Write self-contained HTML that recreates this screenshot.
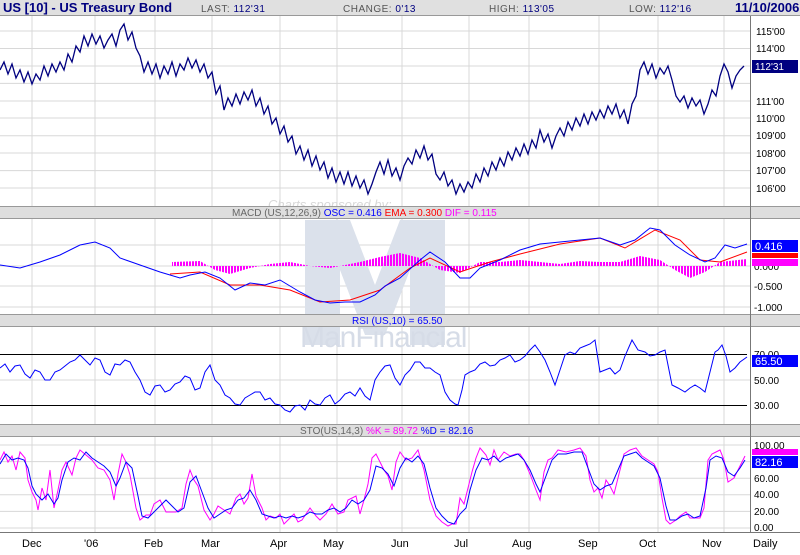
<!DOCTYPE html>
<html><head><meta charset="utf-8"><style>
body{margin:0;width:800px;height:550px;overflow:hidden;background:#fff;font-family:"Liberation Sans",Arial,sans-serif}
</style></head><body>
<svg width="800" height="550" xmlns="http://www.w3.org/2000/svg" font-family="Liberation Sans, Arial, sans-serif">
<defs>
<pattern id="hs" width="3" height="10" patternUnits="userSpaceOnUse"><rect width="2" height="10" fill="#f0f"/></pattern>
</defs>
<rect width="800" height="550" fill="#fff"/>
<g stroke="#d8d8d8" stroke-width="1">
<path d="M32 16V532M95 16V532M155 16V532M212 16V532M280 16V532M337 16V532M402 16V532M469 16V532M529 16V532M599 16V532M658 16V532M724 16V532"/>
<path d="M0 31H750M0 48.5H750M0 66H750M0 83.4H750M0 101H750M0 118H750M0 135.7H750M0 153H750M0 170.6H750M0 188H750"/>
<path d="M0 245H750M0 266H750M0 286H750M0 307H750"/>
<path d="M0 380H750"/>
<path d="M0 445H750M0 461.6H750M0 478.2H750M0 494.8H750M0 511.4H750M0 528H750"/>
</g>
<g fill="#dbe1eb">
<polygon points="305,220 350,220 375,285 400,220 445,220 445,345 410,345 410,270 385,335 365,335 340,270 340,345 305,345"/>
</g>
<text x="268" y="209" font-size="13" fill="#d8d8d8" font-style="italic">Charts sponsored by:</text>
<text x="300" y="347" font-size="30" fill="#d6dce7" letter-spacing="-1">ManFinancial</text>
<rect x="0" y="0" width="800" height="15" fill="#e0e0e0"/>
<line x1="0" y1="15.5" x2="800" y2="15.5" stroke="#999"/>
<text x="3" y="12" font-size="13" font-weight="bold" fill="#000080">US [10] - US Treasury Bond</text>
<text x="201" y="12" font-size="10" fill="#555" letter-spacing=".5">LAST: <tspan fill="#000080">112'31</tspan></text>
<text x="343" y="12" font-size="10" fill="#555" letter-spacing=".5">CHANGE: <tspan fill="#000080">0'13</tspan></text>
<text x="489" y="12" font-size="10" fill="#555" letter-spacing=".5">HIGH: <tspan fill="#000080">113'05</tspan></text>
<text x="629" y="12" font-size="10" fill="#555" letter-spacing=".5">LOW: <tspan fill="#000080">112'16</tspan></text>
<text x="735" y="12" font-size="13" font-weight="bold" fill="#000080">11/10/2006</text>
<g fill="#dedede" stroke="#999">
<rect x="-1" y="206.5" width="802" height="12"/>
<rect x="-1" y="314.5" width="802" height="12"/>
<rect x="-1" y="424.5" width="802" height="12"/>
</g>
<text x="232" y="216" font-size="10" fill="#666">MACD (US,12,26,9) <tspan fill="#0000ff">OSC = 0.416</tspan> <tspan fill="#f00">EMA = 0.300</tspan> <tspan fill="#f0f">DIF = 0.115</tspan></text>
<text x="352" y="324" font-size="10" fill="#0000ff">RSI (US,10) = 65.50</text>
<text x="300" y="434" font-size="10" fill="#666">STO(US,14,3) <tspan fill="#f0f">%K = 89.72</tspan> <tspan fill="#0000ff">%D = 82.16</tspan></text>
<line x1="750.5" y1="16" x2="750.5" y2="532" stroke="#777"/>
<line x1="0" y1="532.5" x2="800" y2="532.5" stroke="#777"/>
<g font-size="10" fill="#000">
<text x="756" y="35">115'00</text><text x="756" y="52">114'00</text>
<text x="756" y="105">111'00</text><text x="756" y="122">110'00</text><text x="756" y="139">109'00</text>
<text x="756" y="157">108'00</text><text x="756" y="174">107'00</text><text x="756" y="192">106'00</text>
<text x="754" y="270">0.000</text><text x="754" y="290">-0.500</text><text x="754" y="311">-1.000</text>
<text x="754" y="358">70.00</text><text x="754" y="384">50.00</text><text x="754" y="409">30.00</text>
<text x="754" y="449">100.00</text><text x="754" y="482">60.00</text><text x="754" y="498">40.00</text><text x="754" y="515">20.00</text><text x="754" y="531">0.00</text>
</g>
<rect x="752" y="60" width="46" height="13" fill="#000080"/><text x="755" y="70" font-size="10" fill="#fff">112'31</text>
<rect x="752" y="240" width="46" height="12" fill="#00f"/><text x="755" y="250" font-size="11" fill="#fff">0.416</text>
<rect x="752" y="253" width="46" height="5" fill="#f00"/>
<rect x="752" y="259" width="46" height="7" fill="#f0f"/>
<rect x="752" y="355" width="46" height="12" fill="#00f"/><text x="755" y="365" font-size="11" fill="#fff">65.50</text>
<rect x="752" y="449" width="46" height="6" fill="#f0f"/>
<rect x="752" y="456" width="46" height="12" fill="#00f"/><text x="755" y="466" font-size="11" fill="#fff">82.16</text>
<g font-size="11" fill="#000">
<text x="22" y="547">Dec</text><text x="84" y="547">'06</text><text x="144" y="547">Feb</text><text x="201" y="547">Mar</text>
<text x="270" y="547">Apr</text><text x="323" y="547">May</text><text x="391" y="547">Jun</text><text x="454" y="547">Jul</text>
<text x="512" y="547">Aug</text><text x="578" y="547">Sep</text><text x="639" y="547">Oct</text><text x="702" y="547">Nov</text><text x="753" y="547">Daily</text>
</g>
<polyline fill="none" stroke="#000080" stroke-width="1.3" points="0,70 4,62 8,74 12,64 16,78 20,70 24,82 28,72 32,84 36,74 40,80 44,66 48,76 52,64 56,72 60,62 64,70 68,54 72,62 76,46 80,52 84,36 88,46 92,34 96,44 100,36 104,48 108,40 112,34 116,46 120,30 124,24 128,40 132,32 136,48 140,56 144,72 148,62 152,74 156,64 160,78 164,66 168,74 172,62 176,76 180,64 184,70 188,58 192,68 196,60 200,72 204,64 208,78 212,72 216,94 220,86 224,110 228,98 232,106 236,94 240,104 244,92 248,100 252,90 256,106 260,98 264,114 268,106 272,124 276,118 280,134 284,126 288,142 292,136 296,154 300,146 304,160 308,150 312,166 316,156 320,170 324,162 328,178 332,168 336,182 340,172 344,184 348,172 352,186 356,176 360,188 364,180 368,194 372,184 376,172 380,162 384,174 388,160 392,176 396,168 400,180 404,166 408,158 412,164 416,150 420,158 424,146 428,160 432,154 436,174 440,180 444,172 448,186 452,180 456,194 460,184 464,192 468,182 472,188 476,174 480,182 484,168 488,176 492,162 496,170 500,158 504,166 508,152 512,160 516,148 520,156 524,144 528,154 532,140 536,148 540,130 544,142 548,134 552,148 556,136 560,128 564,136 568,122 572,130 576,118 580,126 584,114 588,124 592,112 596,120 600,110 604,118 608,106 612,114 616,104 620,118 624,110 628,124 632,104 636,96 640,70 644,62 648,74 652,64 656,78 660,68 664,74 668,66 672,80 676,96 680,102 684,96 688,108 692,98 696,106 700,100 704,114 708,104 712,90 716,96 720,76 724,64 728,72 732,88 736,76 740,70 744,66"/>
<path fill="url(#hs)" d="M172 266 L172 262 200 261 215 270 230 274 250 268 270 264 290 262 310 266 330 268 360 262 380 257 400 253 420 258 440 270 460 273 480 262 500 262 520 260 540 262 560 264 580 261 600 262 620 262 640 256 660 260 675 270 690 278 705 272 720 262 747 259 L747 266 Z"/>
<polyline fill="none" stroke="#f00" stroke-width="1" points="170,274 200,272 230,285 260,285 290,290 320,302 350,300 380,290 410,268 430,258 460,272 490,262 520,254 560,244 600,238 625,248 655,230 680,240 700,260 720,262 747,252"/>
<polyline fill="none" stroke="#00f" stroke-width="1" points="0,265 20,268 40,262 60,255 80,245 95,242 110,248 120,258 140,265 160,272 180,278 190,275 205,272 220,278 235,290 250,283 265,285 280,280 300,292 315,300 330,303 345,302 360,302 375,295 385,286 400,278 420,260 430,252 445,262 460,278 470,278 480,268 500,260 520,250 540,244 560,242 580,240 600,238 620,245 635,240 650,228 660,230 675,245 690,255 705,262 715,258 725,245 735,248 747,244"/>
<path d="M0 354.5H747M0 405.5H747" stroke="#000" stroke-width="1"/>
<polyline fill="none" stroke="#00f" stroke-width="1" points="0,368 5,364 10,372 15,366 20,365 25,374 30,378 35,370 40,372 45,380 50,380 55,372 60,370 65,366 70,362 75,360 80,355 85,360 90,365 95,358 100,360 105,372 110,375 115,364 120,365 125,360 130,362 135,372 140,380 145,392 150,395 155,386 160,385 165,392 170,390 175,384 180,382 185,376 190,378 195,390 200,388 205,372 210,365 215,380 220,385 225,395 230,398 235,404 240,405 245,398 250,395 255,392 260,392 265,400 270,398 275,404 280,405 285,410 290,412 295,406 300,405 305,410 310,400 315,404 320,405 325,398 330,395 335,404 340,400 345,394 350,392 355,396 360,388 365,396 370,400 375,380 380,372 385,366 390,365 395,378 400,385 405,375 410,370 415,362 420,362 425,368 430,368 435,372 440,375 445,392 450,400 455,404 458,405 462,390 465,375 470,372 475,370 480,364 485,362 490,366 495,365 500,360 505,358 510,355 515,362 520,360 525,356 530,350 535,345 540,352 545,360 550,372 555,385 560,370 565,355 570,352 575,354 580,348 585,346 590,344 595,340 600,372 605,370 610,368 615,374 620,370 625,356 632,340 638,350 645,352 650,356 655,355 660,352 665,350 669,370 672,385 678,388 685,392 690,388 695,385 700,388 705,392 710,372 715,352 718,350 722,345 726,356 730,372 735,368 740,362 747,357"/>
<polyline fill="none" stroke="#f0f" stroke-width="1" points="0,460 4,452 8,462 12,456 16,470 20,452 25,458 28,480 32,492 36,500 38,510 42,488 46,500 50,470 54,508 58,490 62,470 66,462 72,475 76,458 80,450 86,455 92,460 98,468 104,470 110,480 114,500 118,474 122,454 126,462 130,475 136,508 140,520 146,515 150,515 154,504 160,500 166,512 170,512 176,512 182,508 186,484 190,470 194,480 198,486 204,510 210,520 214,514 218,506 224,510 230,514 236,498 240,494 244,504 248,498 252,474 256,496 262,508 266,520 270,516 276,518 280,514 284,524 288,520 294,514 298,522 302,520 306,514 310,508 316,516 320,520 326,514 332,504 338,514 344,512 348,500 356,496 360,514 364,500 368,484 372,458 376,454 380,462 384,470 388,476 392,490 396,462 400,452 406,460 412,458 418,450 424,470 430,500 436,516 442,522 448,526 452,524 456,524 460,498 464,504 468,488 472,472 476,458 480,448 486,455 490,465 494,450 498,460 504,452 510,456 516,454 520,454 524,460 530,474 536,490 540,500 544,472 548,460 552,458 558,450 566,452 574,450 580,448 586,456 590,480 594,492 598,488 602,498 606,480 610,486 614,494 620,470 624,454 630,450 636,448 642,456 648,460 654,464 658,472 662,498 666,520 670,524 676,520 680,516 686,512 690,518 694,518 700,518 704,508 708,460 712,454 716,452 720,450 724,460 728,482 734,478 740,466 745,456"/>
<polyline fill="none" stroke="#00f" stroke-width="1" points="0,464 6,454 12,460 18,458 24,460 28,468 32,486 36,494 42,500 48,494 54,504 58,498 62,480 68,462 74,458 80,460 86,452 92,458 98,462 104,466 110,472 116,486 120,478 126,462 132,468 138,496 142,516 148,518 154,512 160,506 166,500 172,506 178,512 184,508 190,482 196,476 202,492 208,508 214,518 220,514 226,510 232,508 238,500 244,498 250,490 256,500 262,514 268,516 274,518 280,516 286,518 292,516 298,518 304,516 310,512 316,514 322,514 328,510 334,508 340,512 346,508 352,500 358,504 364,500 370,490 376,466 382,468 388,474 394,486 400,468 406,458 412,462 418,456 424,464 430,488 436,508 442,516 448,522 454,524 460,514 466,508 470,490 476,470 482,458 488,460 494,456 500,462 506,458 512,456 518,454 524,460 530,470 536,484 540,492 546,476 552,460 558,454 566,454 574,452 582,452 588,468 594,484 600,490 606,486 612,484 618,470 624,456 630,454 636,452 642,458 648,462 654,466 660,478 666,506 670,520 676,520 682,516 688,514 694,518 700,516 706,488 710,460 716,456 722,458 728,472 734,476 740,468 745,460"/>
</svg>
</body></html>
